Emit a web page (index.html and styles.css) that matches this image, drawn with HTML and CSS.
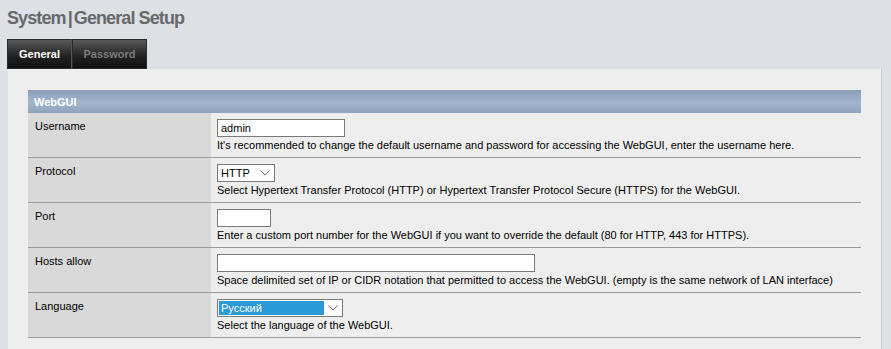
FILE: index.html
```html
<!DOCTYPE html>
<html lang="en">

<head>
  <meta charset="UTF-8">
  <title>System | General Setup</title>
  <link rel="stylesheet" href="styles.css">
</head>

<body>
  <h1 class="pageTitle">System<span class="bar">|</span>General Setup</h1>

  <div class="tabs">
    <a href="#" class="tab active">General</a>
    <a href="#" class="tab">Password</a>
  </div>

  <div class="panel">
    <table class="setup">
      <colgroup>
        <col class="labelCol">
        <col>
      </colgroup>
      <tr>
        <th colspan="2">WebGUI</th>
      </tr>
      <tr>
        <td class="label">Username</td>
        <td class="value">
          <input type="text" class="txt user" value="admin">
          <p>It's recommended to change the default username and password for accessing the WebGUI, enter the username here.</p>
        </td>
      </tr>
      <tr>
        <td class="label">Protocol</td>
        <td class="value">
          <div class="sel proto">
            <span class="selText">HTTP</span>
            <svg class="chev" width="10" height="6" viewBox="0 0 10 6"><path d="M0.5 0.5 L5 5 L9.5 0.5" fill="none" stroke="#6b6b6b" stroke-width="1"/></svg>
          </div>
          <p>Select Hypertext Transfer Protocol (HTTP) or Hypertext Transfer Protocol Secure (HTTPS) for the WebGUI.</p>
        </td>
      </tr>
      <tr>
        <td class="label">Port</td>
        <td class="value">
          <input type="text" class="txt port" value="">
          <p>Enter a custom port number for the WebGUI if you want to override the default (80 for HTTP, 443 for HTTPS).</p>
        </td>
      </tr>
      <tr>
        <td class="label">Hosts allow</td>
        <td class="value">
          <input type="text" class="txt hosts" value="">
          <p>Space delimited set of IP or CIDR notation that permitted to access the WebGUI. (empty is the same network of LAN interface)</p>
        </td>
      </tr>
      <tr>
        <td class="label">Language</td>
        <td class="value">
          <div class="sel lang">
            <span class="selText picked">Русский</span>
            <svg class="chev" width="10" height="6" viewBox="0 0 10 6"><path d="M0.5 0.5 L5 5 L9.5 0.5" fill="none" stroke="#6b6b6b" stroke-width="1"/></svg>
          </div>
          <p>Select the language of the WebGUI.</p>
        </td>
      </tr>
    </table>
  </div>
</body>

</html>
```

FILE: styles.css
```css
body {
  margin: 0;
  background-color: #dde0e5;
  font-family: "Liberation Sans", Arial, sans-serif;
  font-size: 11px;
  color: #000;
}

.pageTitle {
  margin: 0;
  padding: 7px 0 0 7px;
  height: 32px;
  box-sizing: border-box;
  font-size: 18px;
  font-weight: bold;
  letter-spacing: -0.9px;
  color: #67696d;
  line-height: 22px;
}

.pageTitle .bar {
  padding: 0 2px;
}

.tabs {
  display: flex;
  margin: 7px 0 0 7px;
  height: 30px;
}

.tab {
  display: block;
  box-sizing: border-box;
  height: 30px;
  line-height: 28px;
  text-align: center;
  font-weight: bold;
  font-size: 11px;
  color: #7c7c7c;
  text-decoration: none;
  border: 1px solid #2a2a2a;
  background: linear-gradient(#5a5a5a, #202020 60%, #111);
}

.tab.active {
  color: #fff;
  width: 65px;
  border-right: 1px solid #555;
}

.tab + .tab {
  width: 75px;
}

.panel {
  margin: 0 9px 0 8px;
  background-color: #eeeeee;
  padding: 21px 20px 20px 20px;
  border-right: 1px solid #c8cbd0;
  min-height: 300px;
}

.setup {
  width: 100%;
  border-collapse: collapse;
  table-layout: fixed;
}

.labelCol {
  width: 183px;
}

.setup th {
  height: 23px;
  padding: 0 6px;
  text-align: left;
  font-size: 11px;
  font-weight: bold;
  color: #fff;
  background: linear-gradient(#8b9fbb, #a2b5cd 55%, #8ea3be);
}

.setup td {
  border-bottom: 1px solid #9a9a9a;
  vertical-align: top;
}

.setup .label {
  background-color: #d9d9d9;
  padding: 7px 7px 0 7px;
  height: 44px;
  box-sizing: border-box;
}

.setup .value {
  padding: 6px 6px 5px 6px;
}

.value p {
  margin: 1px 0 0 0;
  line-height: 14px;
}

.txt {
  display: block;
  box-sizing: border-box;
  height: 18px;
  margin: 0;
  padding: 0 3px;
  border: 1px solid #7a7a7a;
  background: #fff;
  font-family: inherit;
  font-size: 11px;
  outline: none;
}

.txt.user {
  width: 128px;
}

.txt.port {
  width: 54px;
}

.txt.hosts {
  width: 318px;
}

.sel {
  position: relative;
  box-sizing: border-box;
  height: 18px;
  border: 1px solid #7a7a7a;
  background: #fff;
  display: flex;
  align-items: center;
}

.sel.proto {
  width: 58px;
  padding-left: 3px;
}

.sel.lang {
  width: 126px;
  padding: 1px;
}

.selText.picked {
  width: 105px;
  height: 14px;
  line-height: 14px;
  padding-left: 2px;
  box-sizing: border-box;
  background-color: #2a9ad6;
  color: #fff;
}

.chev {
  position: absolute;
  right: 4px;
  top: 5px;
}
```
